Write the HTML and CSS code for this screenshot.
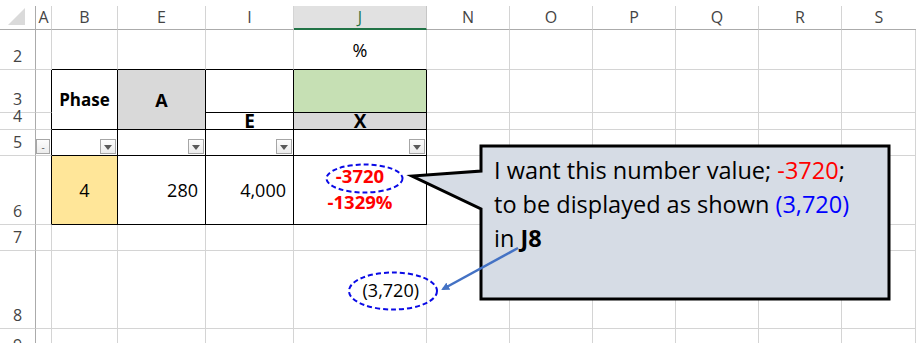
FILE: index.html
```html
<!DOCTYPE html>
<html lang="en">
<head>
    <meta charset="UTF-8">
    <title>Number format question</title>
    <link rel="stylesheet" href="styles.css">
</head>
<body>
    <div class="page">
        <div class="sheet">
            <!-- column headers -->
            <div class="hd corner"><span class="corner-tri"></span></div>
            <div class="hd">A</div>
            <div class="hd">B</div>
            <div class="hd">E</div>
            <div class="hd">I</div>
            <div class="hd selected">J</div>
            <div class="hd">N</div>
            <div class="hd">O</div>
            <div class="hd">P</div>
            <div class="hd">Q</div>
            <div class="hd">R</div>
            <div class="hd last">S</div>

            <!-- row 2 -->
            <div class="rh">2</div>
            <div class="c"></div>
            <div class="c top-edge"></div>
            <div class="c top-edge"></div>
            <div class="c top-edge"></div>
            <div class="c top-edge center">%</div>
            <div class="c"></div><div class="c"></div><div class="c"></div><div class="c"></div><div class="c"></div><div class="c"></div>

            <!-- row 3 -->
            <div class="rh">3</div>
            <div class="c left-edge"></div>
            <div class="c t span2 center bold">Phase</div>
            <div class="c t span2 center bold gray big">A</div>
            <div class="c t"></div>
            <div class="c t green"></div>
            <div class="c"></div><div class="c"></div><div class="c"></div><div class="c"></div><div class="c"></div><div class="c"></div>

            <!-- row 4 -->
            <div class="rh">4</div>
            <div class="c left-edge"></div>
            <div class="c t bottom bold">E</div>
            <div class="c t bottom bold gray">X</div>
            <div class="c"></div><div class="c"></div><div class="c"></div><div class="c"></div><div class="c"></div><div class="c"></div>

            <!-- row 5 -->
            <div class="rh">5</div>
            <div class="c left-edge filter-cell"><span class="filter narrow">-</span></div>
            <div class="c t filter-cell"><span class="filter"></span></div>
            <div class="c t filter-cell"><span class="filter"></span></div>
            <div class="c t filter-cell"><span class="filter"></span></div>
            <div class="c t filter-cell"><span class="filter"></span></div>
            <div class="c"></div><div class="c"></div><div class="c"></div><div class="c"></div><div class="c"></div><div class="c"></div>

            <!-- row 6 -->
            <div class="rh">6</div>
            <div class="c left-edge"></div>
            <div class="c t center yellow">4</div>
            <div class="c t right">280</div>
            <div class="c t right">4,000</div>
            <div class="c t stack">
                <span class="neg">-3720</span>
                <span class="neg">-1329%</span>
            </div>
            <div class="c"></div><div class="c"></div><div class="c"></div><div class="c"></div><div class="c"></div><div class="c"></div>

            <!-- row 7 -->
            <div class="rh">7</div>
            <div class="c"></div><div class="c"></div><div class="c"></div><div class="c"></div><div class="c"></div>
            <div class="c"></div><div class="c"></div><div class="c"></div><div class="c"></div><div class="c"></div><div class="c"></div>

            <!-- row 8 -->
            <div class="rh">8</div>
            <div class="c"></div><div class="c"></div><div class="c"></div><div class="c"></div>
            <div class="c right">(3,720)</div>
            <div class="c"></div><div class="c"></div><div class="c"></div><div class="c"></div><div class="c"></div><div class="c"></div>

            <!-- row 9 -->
            <div class="rh">9</div>
            <div class="c"></div><div class="c"></div><div class="c"></div><div class="c"></div><div class="c"></div>
            <div class="c"></div><div class="c"></div><div class="c"></div><div class="c"></div><div class="c"></div><div class="c"></div>
        </div>

        <!-- annotations drawn over the sheet -->
        <svg class="overlay" width="916" height="343" viewBox="0 0 916 343">
            <defs>
                <marker id="head" markerWidth="8" markerHeight="8" refX="6" refY="4" orient="auto" markerUnits="userSpaceOnUse">
                    <path d="M0,0 L8,4 L0,8 Z" fill="#4472c4"/>
                </marker>
            </defs>
            <ellipse cx="364.5" cy="178.5" rx="38" ry="14" fill="none" stroke="#0a0ae6" stroke-width="2" stroke-dasharray="5 3"/>
            <ellipse cx="393" cy="291" rx="44" ry="18.5" fill="none" stroke="#0a0ae6" stroke-width="2" stroke-dasharray="5 3"/>
            <polygon points="481,146 889,146 889,299 481,299 481,209 412,176 481,171" fill="#d6dce5" stroke="#000" stroke-width="3" stroke-linejoin="miter"/>
            <line x1="518" y1="248" x2="443" y2="289" stroke="#4472c4" stroke-width="2.5" marker-end="url(#head)"/>
        </svg>

        <div class="callout-text">
            I want this number value; <span class="red">-3720</span>;<br>
            to be displayed as shown <span class="blue">(3,720)</span><br>
            in <b>J8</b>
        </div>
    </div>
</body>
</html>
```

FILE: styles.css
```css
:root {
    --grid: #d4d4d4;
    --head-line: #ababab;
    --ink: #000;
    --head-ink: #444;
}

* {
    margin: 0;
    padding: 0;
    box-sizing: border-box;
}

body {
    background: white;
    font-family: 'Open Sans', 'DejaVu Sans', sans-serif;
    overflow: hidden;
    width: 916px;
    height: 343px;
}

.page {
    position: relative;
    width: 916px;
    height: 343px;
    padding-top: 6px;
    overflow: hidden;
}

.sheet {
    display: grid;
    grid-template-columns: 36px 16px 66px 88px 88px 133px 83px 83px 83px 83px 83px 74px;
    grid-template-rows: 24px 40px 43px 17px 26px 69px 26px 78px 30px;
}

/* column headers */
.hd {
    display: flex;
    align-items: center;
    justify-content: center;
    font-size: 16px;
    color: var(--head-ink);
    border-right: 1px solid var(--grid);
    border-bottom: 1px solid var(--head-line);
    padding-bottom: 1px;
}

.hd.last {
    border-right: none;
}

.hd.selected {
    background: #e1e1e1;
    color: #217346;
    border-right-color: #c6c6c6;
    border-bottom: 2px solid #217346;
}

.hd.corner {
    border-right: 1px solid var(--head-line);
    position: relative;
}

.corner-tri {
    width: 0;
    height: 0;
    border-style: solid;
    border-width: 0 0 17px 17px;
    border-color: transparent transparent #dadada transparent;
    margin-left: -2px;
    margin-top: -2px;
}

/* row headers */
.rh {
    display: flex;
    align-items: flex-end;
    justify-content: center;
    font-size: 16px;
    line-height: 1;
    color: var(--head-ink);
    padding-bottom: 5px;
    border-right: 1px solid var(--head-line);
    border-bottom: 1px solid var(--grid);
}

/* cells */
.c {
    display: flex;
    align-items: center;
    font-size: 18px;
    color: var(--ink);
    border-right: 1px solid var(--grid);
    border-bottom: 1px solid var(--grid);
    white-space: nowrap;
    overflow: visible;
}

.c.t {
    border-right-color: var(--ink);
    border-bottom-color: var(--ink);
}

.c.top-edge {
    border-bottom-color: var(--ink);
}

.c.left-edge {
    border-right-color: var(--ink);
}

.span2 {
    grid-row: span 2;
}

.center {
    justify-content: center;
}

.right {
    justify-content: flex-end;
    padding-right: 7px;
}

.bold {
    font-weight: 700;
    font-size: 17px;
}

.bottom {
    justify-content: center;
    align-items: flex-end;
    font-size: 19px;
    line-height: 16px;
    overflow: hidden;
}

.big {
    font-size: 18px;
}

.gray {
    background: #d9d9d9;
}

.green {
    background: #c6e0b4;
}

.yellow {
    background: #ffe699;
}

.stack {
    flex-direction: column;
    justify-content: center;
    align-items: center;
    line-height: 26px;
    padding-bottom: 2px;
}

.neg {
    color: #ff0000;
    font-weight: 700;
    font-size: 18.5px;
}

.filter-cell {
    justify-content: flex-end;
    align-items: flex-end;
    padding: 0 1px 1px 0;
}

.filter {
    width: 16px;
    height: 15px;
    border: 1px solid #a6a6a6;
    background: linear-gradient(#fdfdfd, #ececec);
    display: flex;
    align-items: center;
    justify-content: center;
    font-size: 10px;
    color: #595959;
    line-height: 1;
}

.filter:not(.narrow)::after {
    content: "";
    border-style: solid;
    border-width: 5px 4px 0 4px;
    border-color: #595959 transparent transparent transparent;
    margin-top: 1px;
}

.filter.narrow {
    width: 15px;
}

/* annotations */
.overlay {
    position: absolute;
    left: 0;
    top: 0;
    pointer-events: none;
}

.callout-text {
    position: absolute;
    left: 494px;
    top: 153px;
    font-size: 23.5px;
    line-height: 34px;
    color: #000;
    white-space: nowrap;
}

.callout-text b {
    font-weight: 700;
}

.red {
    color: #ff0000;
}

.blue {
    color: #0000ff;
}
```
